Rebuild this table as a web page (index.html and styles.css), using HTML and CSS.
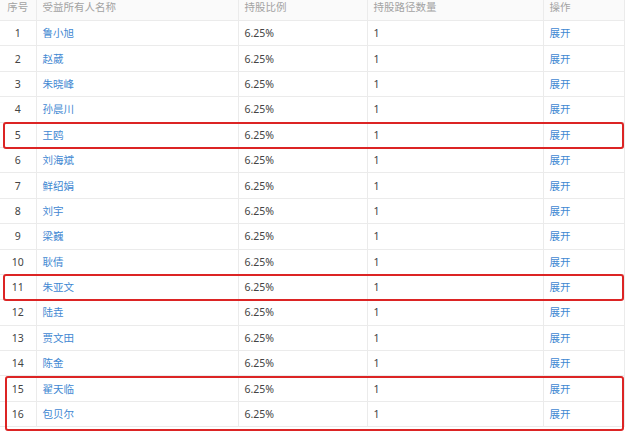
FILE: index.html
```html
<!DOCTYPE html>
<html lang="zh-CN">
<head>
<meta charset="utf-8">
<link rel="stylesheet" href="styles.css">
</head>
<body>
<div class="wrap">
<table class="grid">
<colgroup>
<col class="c-no"><col class="c-name"><col class="c-ratio"><col class="c-path"><col class="c-op">
</colgroup>
<thead>
<tr><th class="center">序号</th><th>受益所有人名称</th><th>持股比例</th><th>持股路径数量</th><th>操作</th></tr>
</thead>
<tbody>
<tr><td class="center">1</td><td class="link">鲁小旭</td><td>6.25%</td><td>1</td><td class="link">展开</td></tr>
<tr><td class="center">2</td><td class="link">赵葳</td><td>6.25%</td><td>1</td><td class="link">展开</td></tr>
<tr><td class="center">3</td><td class="link">朱晓峰</td><td>6.25%</td><td>1</td><td class="link">展开</td></tr>
<tr><td class="center">4</td><td class="link">孙晨川</td><td>6.25%</td><td>1</td><td class="link">展开</td></tr>
<tr><td class="center">5</td><td class="link">王鸥</td><td>6.25%</td><td>1</td><td class="link">展开</td></tr>
<tr><td class="center">6</td><td class="link">刘海斌</td><td>6.25%</td><td>1</td><td class="link">展开</td></tr>
<tr><td class="center">7</td><td class="link">鲜绍娟</td><td>6.25%</td><td>1</td><td class="link">展开</td></tr>
<tr><td class="center">8</td><td class="link">刘宇</td><td>6.25%</td><td>1</td><td class="link">展开</td></tr>
<tr><td class="center">9</td><td class="link">梁巍</td><td>6.25%</td><td>1</td><td class="link">展开</td></tr>
<tr><td class="center">10</td><td class="link">耿倩</td><td>6.25%</td><td>1</td><td class="link">展开</td></tr>
<tr><td class="center">11</td><td class="link">朱亚文</td><td>6.25%</td><td>1</td><td class="link">展开</td></tr>
<tr><td class="center">12</td><td class="link">陆垚</td><td>6.25%</td><td>1</td><td class="link">展开</td></tr>
<tr><td class="center">13</td><td class="link">贾文田</td><td>6.25%</td><td>1</td><td class="link">展开</td></tr>
<tr><td class="center">14</td><td class="link">陈金</td><td>6.25%</td><td>1</td><td class="link">展开</td></tr>
<tr><td class="center">15</td><td class="link">翟天临</td><td>6.25%</td><td>1</td><td class="link">展开</td></tr>
<tr><td class="center">16</td><td class="link">包贝尔</td><td>6.25%</td><td>1</td><td class="link">展开</td></tr>
</tbody>
</table>
<div class="mark mark-a"></div>
<div class="mark mark-b"></div>
<div class="mark mark-c"></div>
</div>
</body>
</html>
```
FILE: styles.css
```css
html, body {
  margin: 0;
  padding: 0;
  background: #ffffff;
}
body {
  font-family: "Noto Sans", "Noto Sans CJK SC", sans-serif;
  font-size: 10.5px;
  color: #444444;
}
.wrap {
  position: relative;
  width: 630px;
  height: 433px;
  overflow: hidden;
}
.grid {
  border-collapse: collapse;
  table-layout: fixed;
  width: 624px;
}
.c-no { width: 36px; }
.c-name { width: 202px; }
.c-ratio { width: 129px; }
.c-path { width: 176px; }
.c-op { width: 81px; }
.grid th, .grid td {
  border: 1px solid #ebebeb;
  padding: 0 6px;
  text-align: left;
  white-space: nowrap;
  line-height: 14px;
}
.grid th {
  height: 20px;
  font-weight: normal;
  color: #a3a3a3;
  background: #fafafa;
  vertical-align: top;
  padding-top: 0;
  border-top: none;
}
.grid th:first-child, .grid td:first-child {
  border-left: none;
}
.grid td {
  height: 25.4px;
  padding-top: 0;
  padding-bottom: 0;
  vertical-align: middle;
  box-sizing: border-box;
}
.grid .center {
  text-align: center;
  padding: 0;
}
.grid .link {
  color: #3f88d2;
}
.mark {
  position: absolute;
  border: 2px solid #dc2424;
  border-radius: 3px;
  box-sizing: border-box;
}
.mark-a {
  left: 3px;
  top: 122px;
  width: 621px;
  height: 27px;
}
.mark-b {
  left: 3px;
  top: 274px;
  width: 621px;
  height: 27px;
}
.mark-c {
  left: 5px;
  top: 376px;
  width: 619px;
  height: 55px;
}
```
